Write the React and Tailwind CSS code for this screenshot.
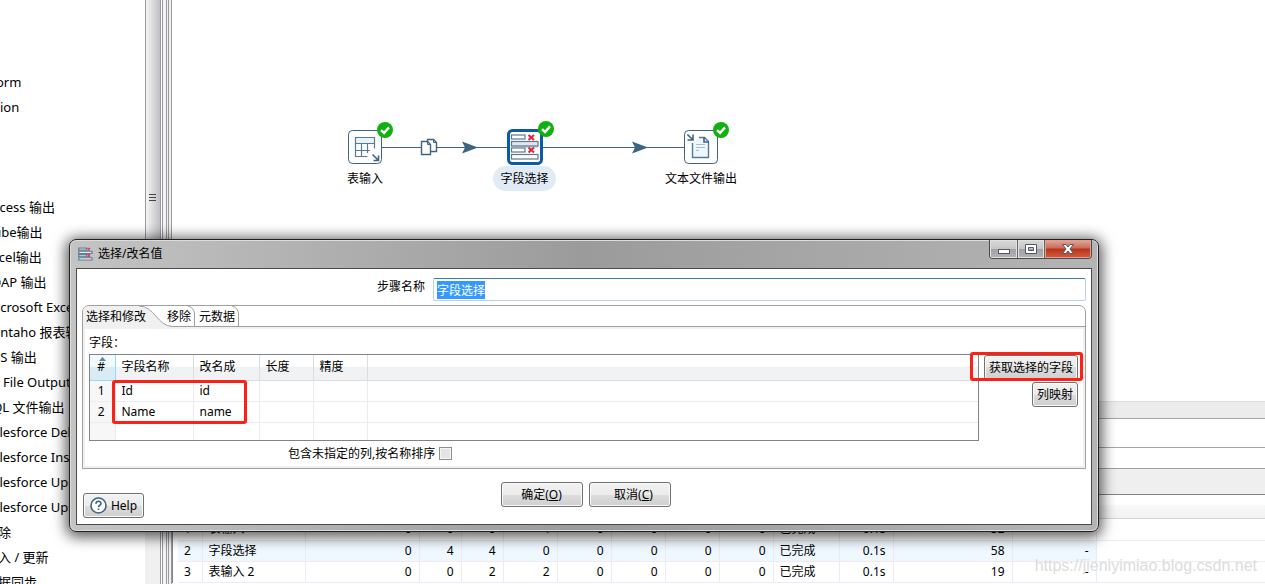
import React from 'react';

const treeItems = [
  '',
  '',
  'orm',
  'ion',
  '',
  '',
  '',
  'Access 输出',
  'Cube输出',
  'Excel输出',
  'LDAP 输出',
  'Microsoft Exce',
  'Pentaho 报表输',
  'RSS 输出',
  'S3 File Output',
  'SQL 文件输出',
  'Salesforce Del',
  'Salesforce Inse',
  'Salesforce Upd',
  'Salesforce Ups',
  '删除',
  '插入 / 更新',
  '数据同步',
];

const metrics = [
  ['1', '表输入', '0', '0', '0', '4', '0', '0', '0', '0', '已完成', '0.1s', '52', '-'],
  ['2', '字段选择', '0', '4', '4', '0', '0', '0', '0', '0', '已完成', '0.1s', '58', '-'],
  ['3', '表输入 2', '0', '0', '2', '2', '0', '0', '0', '0', '已完成', '0.1s', '19', '-'],
];

const metricWidths = [24, 103, 114, 42, 42, 54, 54, 54, 54, 54, 66, 54, 119, 84];

const fields = [
  ['1', 'Id', 'id', '', '', ''],
  ['2', 'Name', 'name', '', '', ''],
  ['', '', '', '', '', ''],
];

const buttonClass =
  'flex items-center justify-center rounded-[3px] border border-[#707070] bg-[linear-gradient(#f2f2f2,#ebebeb_50%,#dddddd_50%,#cfcfcf)] text-black shadow-[inset_0_0_0_1px_#fafafa] whitespace-nowrap';

const windowButtonClass =
  'flex items-center justify-center border-r border-[#666] bg-[linear-gradient(#dadada,#c4c4c4_50%,#a2a2a5_50%,#b4b4b6)] shadow-[inset_0_0_0_1px_#e2e2e2]';

const CheckBadge = () => (
  <svg className="absolute -top-2 -right-[11px] w-4 h-4" viewBox="0 0 16 16">
    <circle cx="8" cy="8" r="8" fill="#10b010" />
    <path d="M4 8.2 L7 11 L12 5.4" fill="none" stroke="#fff" strokeWidth="2.4" />
  </svg>
);

const TableInputIcon = () => (
  <svg className="w-[34px] h-[34px]" viewBox="0 0 34 34">
    <rect x="0.5" y="0.5" width="33" height="33" rx="4" fill="#fff" stroke="#3d6480" />
    <path d="M8 8h18v5H8z" fill="#e6f3fb" />
    <path
      d="M19.500 26.500H7.500V7.500H26.500V18.500M7.500 13.500H26.500M7.500 20.500H22M13.500 13.500V26.500M19.500 13.500V23"
      fill="none"
      stroke="#5b7a92"
      strokeWidth="1.200"
    />
    <path d="M24.500 24.500L30 30M30.500 25.500V30.500H25.500" fill="none" stroke="#3d6480" strokeWidth="1.600" />
  </svg>
);

const SelectValuesShapes = () => (
  <g strokeWidth="1.200">
    <rect x="4.500" y="6" width="13.500" height="4" fill="#fff" stroke="#5b7a92" />
    <rect x="4.500" y="12.500" width="26.500" height="4.500" fill="#dfe7ed" stroke="#5b7a92" />
    <rect x="4.500" y="19" width="13.500" height="4" fill="#fff" stroke="#5b7a92" />
    <rect x="4.500" y="25.500" width="26.500" height="4.500" fill="#fff" stroke="#5b7a92" />
    <path d="M5 17.500H31" stroke="#8ba0b1" strokeWidth="1.800" />
    <path d="M21.500 6l5.500 5M27 6l-5.500 5M21.500 18.500l5.500 5M27 18.500l-5.500 5" stroke="#e8203c" strokeWidth="2" />
  </g>
);

const SelectValuesIcon = () => (
  <svg className="w-9 h-9" viewBox="0 0 36 36">
    <rect x="1.500" y="1.500" width="33" height="33" rx="4" fill="#fff" stroke="#0a5aa5" strokeWidth="3" />
    <SelectValuesShapes />
  </svg>
);

const TextOutputIcon = () => (
  <svg className="w-[34px] h-[34px]" viewBox="0 0 34 34">
    <rect x="0.5" y="0.5" width="33" height="33" rx="4" fill="#fff" stroke="#3d6480" />
    <path d="M8.500 13V27.500H24.500V11.500L20.500 7.500H15" fill="#eef7fd" stroke="#5b7a92" strokeWidth="1.400" />
    <path d="M20 7v5h5" fill="none" stroke="#3d6480" strokeWidth="1.600" />
    <path d="M12 14.500h9M12 17.500h9M12 20.500h3" stroke="#a9bccb" />
    <path d="M3.500 4.500L8.500 9.500M9 4.500V10H3.500" fill="none" stroke="#3d6480" strokeWidth="1.600" />
  </svg>
);

// Hops between the steps, drawn beneath the nodes
const Hops = () => (
  <svg className="absolute left-[210px] top-[136px] w-[304px] h-[24px]" viewBox="0 0 304 24">
    <path d="M0 11.500H302" stroke="#3d6480" />
    <path d="M80 5.500L96 11.500L80 17.500L83 11.500zM250 5.500L266 11.500L250 17.500L253 11.500z" fill="#3d6480" />
    <path d="M45.500 3.500h6l3 3v9h-9z" fill="#fff" stroke="#3d6480" strokeWidth="1.400" />
    <path d="M39.500 5.500h6l3 3v10h-9z" fill="#fff" stroke="#3d6480" strokeWidth="1.400" />
    <path d="M45.500 5.500v3h3M51.500 3.500v3h3" fill="none" stroke="#3d6480" />
  </svg>
);

const Tree = () => (
  <aside className="w-[145px] shrink-0 overflow-hidden pt-5 text-[13px]">
    <ul>
      {treeItems.map((item, i) => (
        <li
          key={i}
          className={`h-[25px] leading-[25px] whitespace-nowrap ${i > 4 ? '-ml-[15px]' : ''} ${i === 2 ? '-ml-1' : ''}`}
        >
          {item}
        </li>
      ))}
    </ul>
  </aside>
);

const Splitter = () => (
  <div className="flex shrink-0">
    <div className="w-[15px] bg-[#f0f0f0]">
      <div className="h-[400px] flex flex-col items-center border-l border-[#999] bg-linear-to-r from-[#f5f5f5] to-[#c0c0c4] pt-[194px] pr-[2px]">
        <div className="flex flex-col gap-[2px]">
          <span className="w-[7px] h-px bg-[#444]"></span>
          <span className="w-[7px] h-px bg-[#444]"></span>
          <span className="w-[7px] h-px bg-[#444]"></span>
        </div>
      </div>
    </div>
    <div className="w-[3px] border-x border-[#9a9aa0] bg-white"></div>
    <div className="w-[4px] border-r border-[#9a9aa0] bg-[#f3f3f6]"></div>
    <div className="w-[2px] border-r border-[#9a9aa0] bg-[#f3f3f6]"></div>
    <div className="w-[3px] border-r border-[#9a9a9a] bg-[#f0f0f0]"></div>
  </div>
);

const Canvas = () => (
  <section className="relative h-[401px] shrink-0 overflow-hidden">
    <Hops />
    <div className="absolute left-[163px] top-[130px] w-[60px] flex flex-col items-center">
      <div className="relative h-[34px]">
        <TableInputIcon />
        <CheckBadge />
      </div>
      <span className="mt-[5px] leading-5">表输入</span>
    </div>
    <div className="absolute left-[321px] top-[129px] w-[63px] flex flex-col items-center">
      <div className="relative h-9">
        <SelectValuesIcon />
        <CheckBadge />
      </div>
      <span className="mt-px h-[25px] w-full rounded-full bg-[#e1ebf5] text-center leading-[26px]">字段选择</span>
    </div>
    <div className="absolute left-[489px] top-[130px] w-[80px] flex flex-col items-center">
      <div className="relative h-[34px]">
        <TextOutputIcon />
        <CheckBadge />
      </div>
      <span className="mt-[5px] leading-5">文本文件输出</span>
    </div>
  </section>
);

const Results = () => (
  <section className="flex-1 overflow-hidden">
    <div className="h-[17px] border-t border-[#ddd] bg-[#ececec]"></div>
    <div className="h-[30px] border-y border-[#a5a5a5]"></div>
    <div className="h-5"></div>
    <div className="h-[26px] border-t border-[#a0a0a0] bg-[#efefef]"></div>
    <div className="border-t border-l border-[#82828c] pl-[5px]">
      <div className="mt-[10px] h-[14px] border-b border-[#d5d5d5] bg-linear-to-b from-[#f7f8fa] to-[#f1f2f4]"></div>
      <table className="w-full table-fixed border-collapse">
        <colgroup>
          {metricWidths.map((w, i) => (
            <col key={i} style={{ width: w }} />
          ))}
          <col />
        </colgroup>
        <tbody>
          {metrics.map((row, r) => (
            <tr key={row[0]} className={`h-[21px] ${r === 1 ? 'bg-[#eff7ff]' : ''}`}>
              {row.map((cell, c) => (
                <td
                  key={c}
                  className={`border-r border-b border-[#ebebf0] p-0 leading-5 whitespace-nowrap ${
                    c < 2 || c === 10 ? 'pl-[6px] text-left' : 'pr-[7px] text-right'
                  }`}
                >
                  {cell}
                </td>
              ))}
              <td className="border-b border-[#ebebf0] bg-white p-0"></td>
            </tr>
          ))}
        </tbody>
      </table>
    </div>
  </section>
);

const TitleBar = () => (
  <header className="flex items-start justify-between h-[28px]">
    <div className="flex items-center gap-[5px] h-[28px] pl-[2px]">
      <svg className="w-[15px] h-[14px]" viewBox="3 4 30 28">
        <g strokeWidth="2.400">
          <path d="M4.500 6H20v4.500H4.500zM4.500 19H20v4.500H4.500z" fill="#b9c8d2" stroke="#5f7f95" />
          <path d="M4.500 12.500H31v4.500H4.500zM4.500 25.500H31V30H4.500z" fill="#e4eaee" stroke="#5f7f95" />
          <path d="M22 6l5 5M27 6l-5 5M22 18.500l5 5M27 18.500l-5 5" stroke="#e0405a" strokeWidth="3" />
        </g>
      </svg>
      <h1>选择/改名值</h1>
    </div>
    <div className="flex h-[19px] rounded-b-[4px] border border-t-0 border-[#4a4a55] overflow-hidden">
      <button aria-label="最小化" className={`${windowButtonClass} w-[28px]`}>
        <svg className="w-3 h-[10px]" viewBox="0 0 12 10">
          <rect x="0.5" y="5.500" width="11" height="4" fill="#fff" stroke="#535666" />
        </svg>
      </button>
      <button aria-label="最大化" className={`${windowButtonClass} w-[27px]`}>
        <svg className="w-3 h-[10px]" viewBox="0 0 12 10">
          <path d="M0.500 0.500h11v9h-11zM3.500 3.500v3h5v-3z" fill="#fff" fillRule="evenodd" stroke="#535666" />
        </svg>
      </button>
      <button
        aria-label="关闭"
        className="flex items-center justify-center w-[46px] bg-[linear-gradient(#e3a99d,#cd6a56_45%,#b8321a_50%,#d2603f)] shadow-[inset_0_0_0_1px_#e0a090]"
      >
        <svg className="w-3 h-[10px]" viewBox="0 0 12 10">
          <path d="M0.500 0.500h3.500l2 2.500 2-2.500h3.500L8 5l3.500 4.500H8L6 7 4 9.500H0.500L4 5z" fill="#fff" stroke="#535666" />
        </svg>
      </button>
    </div>
  </header>
);

const FieldsTable = () => (
  <div className="relative flex-1 h-[87px] border border-[#82828c]">
    <table className="w-full table-fixed border-collapse">
      <colgroup>
        <col className="w-[25px]" />
        <col className="w-[78px]" />
        <col className="w-[66px]" />
        <col className="w-[54px]" />
        <col className="w-[54px]" />
        <col />
      </colgroup>
      <thead>
        <tr className="h-[25px] bg-linear-to-b from-white from-45% to-[#f1f2f4] to-50%">
          {['#', '字段名称', '改名成', '长度', '精度', ''].map((name, i) => (
            <th
              key={i}
              className={`relative p-0 font-normal border-b leading-6 ${i < 5 ? 'border-r' : ''} ${
                i === 0
                  ? 'text-center pr-[2px] border-[#96d9f9] bg-linear-to-b from-[#f3fafd] from-45% to-[#d8ecf6] to-50%'
                  : 'text-left pl-[6px] border-[#dcdde0]'
              }`}
            >
              {name}
              {i === 0 && (
                <svg className="absolute top-[2px] left-[9px] w-[7px] h-1" viewBox="0 0 7 4">
                  <path d="M0 4L3.500 0L7 4z" fill="#4b8aa8" />
                </svg>
              )}
            </th>
          ))}
        </tr>
      </thead>
      <tbody>
        {fields.map((row, r) => (
          <tr key={r} className={r === 2 ? 'h-[18px]' : 'h-[21px]'}>
            {row.map((cell, c) => (
              <td
                key={c}
                className={`p-0 border-[#ebebf0] leading-5 ${r < 2 ? 'border-b' : ''} ${c < 5 ? 'border-r' : ''} ${
                  c === 0 ? 'text-center pr-[2px] bg-[#f7f7f7]' : 'pl-[6px]'
                }`}
              >
                {cell}
              </td>
            ))}
          </tr>
        ))}
      </tbody>
    </table>
    <div className="absolute left-[22px] top-[25px] w-[135px] h-[44px] rounded-[3px] border-3 border-[#ff2015] pointer-events-none"></div>
  </div>
);

const Tabs = () => (
  <div role="tablist" className="relative flex h-[21px] border-b border-[#a0a0a0] pt-[2px]">
    <svg className="absolute left-0 top-0 w-[160px] h-[21px]" viewBox="0 0 160 21">
      <path d="M0 21V6Q0 0 6 0H56C72 0 74 20 90 20.500V21z" fill="#f0f0f0" />
      <path d="M56 0C72 0 74 20.500 90 20.500" fill="none" stroke="#a0a0a0" />
      <path d="M105 0Q111.500 2 111.500 8V20M149 0Q155.500 2 155.500 8V20" fill="none" stroke="#a0a0a0" />
    </svg>
    <button role="tab" aria-selected="true" className="relative w-[81px] pl-[3px] text-left">选择和修改</button>
    <button role="tab" aria-selected="false" className="relative w-8 pl-[3px] text-left">移除</button>
    <button role="tab" aria-selected="false" className="relative w-[44px] pl-[3px] text-left">元数据</button>
  </div>
);

const Dialog = () => (
  <div
    role="dialog"
    aria-label="选择/改名值"
    className="absolute left-[69px] right-[166px] top-[239px] rounded-[7px] border border-[#222] bg-linear-to-r from-[#c4c4c4] via-[#9b9b9b] to-[#b4b4b4] px-[6px] pb-[6px] shadow-[0_2px_14px_3px_rgba(0,0,0,0.65),inset_0_0_0_1px_#dcdcdc]"
  >
    <TitleBar />
    <div className="border border-[#4a4a4a] bg-white px-[5px] pb-[5px] pt-[9px]">
      <div className="flex items-start">
        <label htmlFor="stepName" className="w-[343px] shrink-0 text-right leading-[18px]">步骤名称</label>
        <input
          id="stepName"
          defaultValue="字段选择"
          autoFocus
          onFocus={(e) => e.target.select()}
          className="ml-2 flex-1 h-[23px] rounded-[2px] border border-[#b5d3e7] border-t-[#3d7bad] pl-[3px] leading-[17px] outline-none selection:bg-[#3399ff] selection:text-white"
        />
      </div>

      <div className="mt-1 rounded-t-[7px] border border-[#a0a0a0] overflow-hidden">
        <Tabs />
        <div className="border-2 border-[#f0f0f0] pl-1 pr-[5px]">
          <p className="h-[25px] leading-[27px]">字段：</p>
          <div className="flex items-start gap-[5px]">
            <FieldsTable />
            <div className="relative flex flex-col items-end gap-[2px] pt-px">
              <button className={`${buttonClass} h-[25px] w-[94px]`}>获取选择的字段</button>
              <button className={`${buttonClass} h-[25px] w-[46px]`}>列映射</button>
              <div className="absolute -left-[14px] -top-[2px] w-[113px] h-[29px] rounded-[3px] border-3 border-[#ff2015] pointer-events-none"></div>
            </div>
          </div>
          <div className="flex items-center gap-1 h-[25px] pl-[199px]">
            <label htmlFor="includeRest">包含未指定的列,按名称排序</label>
            <input
              id="includeRest"
              type="checkbox"
              className="appearance-none w-[13px] h-[13px] border border-[#8e8f8f] bg-[#e4e4e6] shadow-[inset_0_0_0_1px_#f6f6f6]"
            />
          </div>
        </div>
      </div>

      <div className="grid grid-cols-[1fr_auto_1fr] pt-[13px] pb-px pl-px">
        <button className={`${buttonClass} h-[25px] mt-[11px] w-[61px] gap-1`}>
          <svg className="w-[17px] h-[17px]" viewBox="0 0 17 17">
            <circle cx="8.500" cy="8.500" r="7.500" fill="#fff" stroke="#3d6480" strokeWidth="1.600" />
            <path d="M6 6.800C6 3.500 11 3.500 11 6.600C11 8.300 8.500 8.200 8.500 10.200M8.500 11.500V13" fill="none" stroke="#3d6480" strokeWidth="1.600" />
          </svg>
          Help
        </button>
        <div className="flex items-start gap-[6px] pl-[2px]">
          <button className={`${buttonClass} h-[25px] w-[82px]`}>确定(<u>O</u>)</button>
          <button className={`${buttonClass} h-[25px] w-[82px] pl-2`}>取消(<u>C</u>)</button>
        </div>
      </div>
    </div>
  </div>
);

const App = () => {
  return (
    <div className="relative flex h-screen overflow-hidden bg-white text-black text-[12px] font-['Noto_Sans','Noto_Sans_CJK_SC',sans-serif]">
      <Tree />
      <Splitter />
      <main className="flex-1 min-w-0 flex flex-col">
        <Canvas />
        <Results />
      </main>
      <Dialog />
      <div className="absolute right-[8px] bottom-[6px] text-[16px] leading-6 text-[#dcdcdc] font-['Liberation_Sans',sans-serif]">
        https://jieniyimiao.blog.csdn.net
      </div>
    </div>
  );
};

export default App;
